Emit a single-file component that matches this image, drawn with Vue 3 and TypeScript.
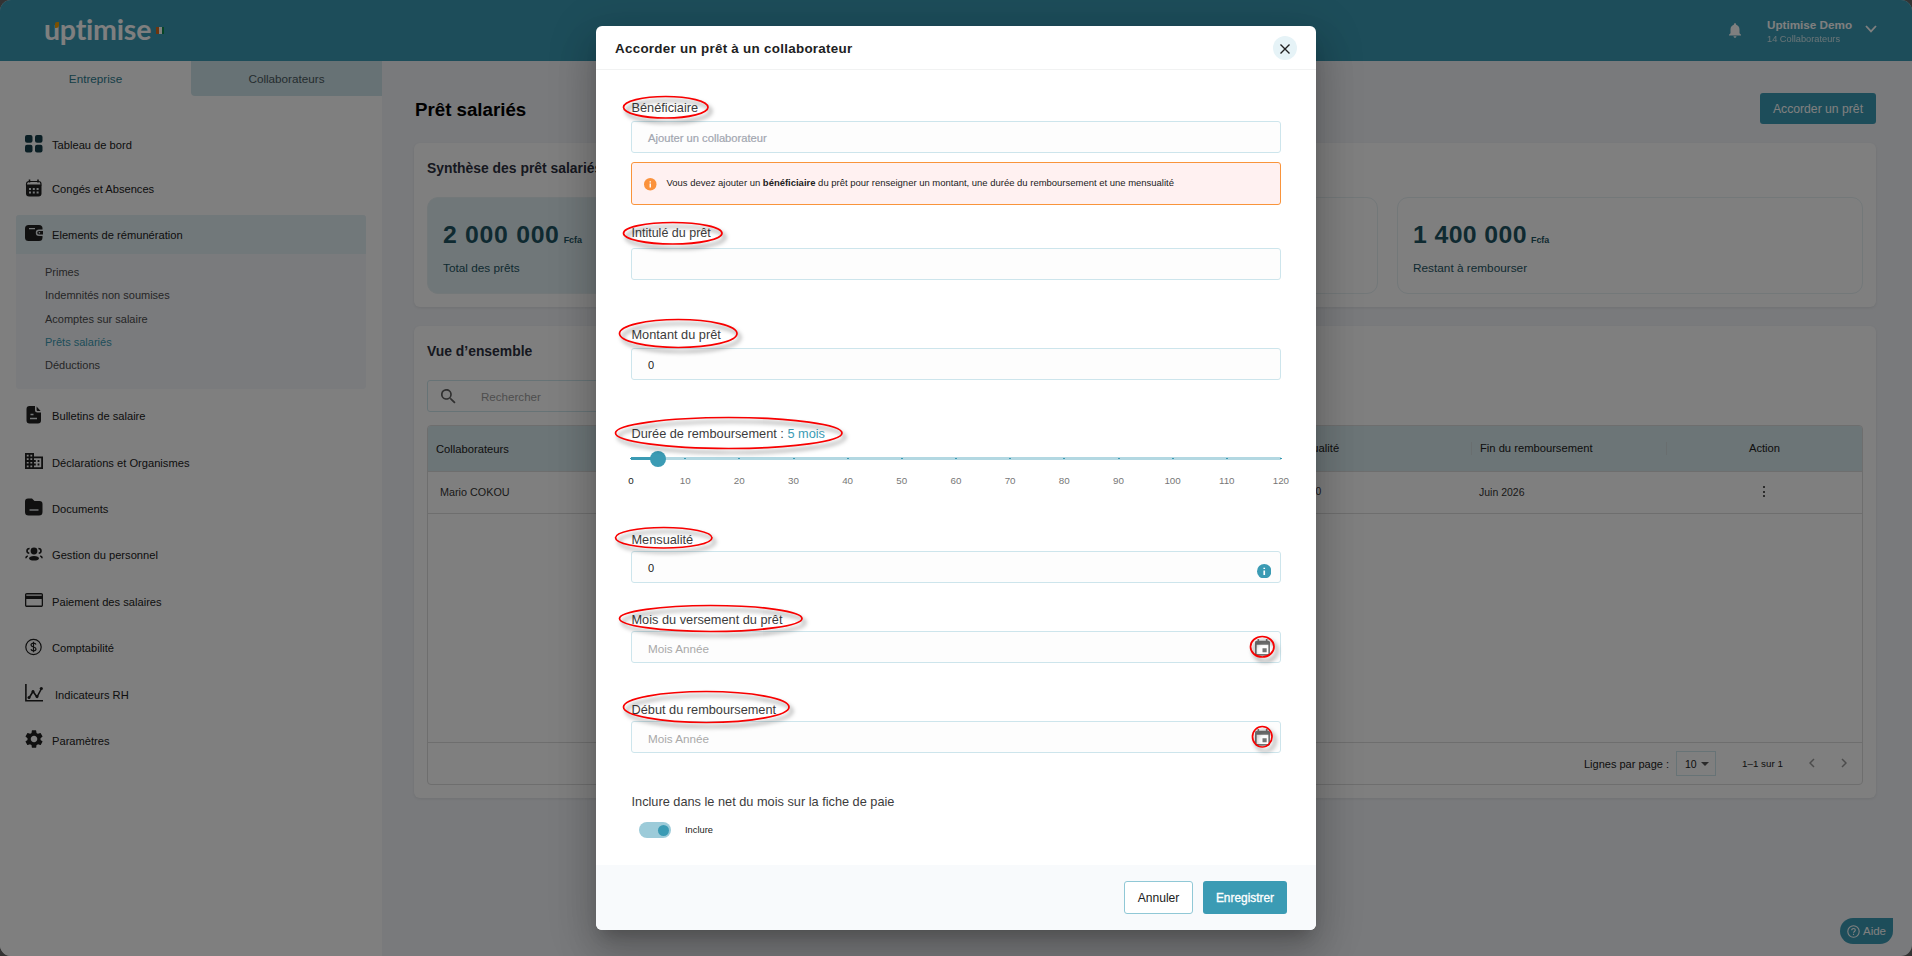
<script setup lang="ts">
import { ref, computed } from 'vue'

interface MenuItem {
  label: string
  icon: string
}

interface Ring {
  x1: number
  y1: number
  x2: number
  y2: number
}

const topMenu: MenuItem[] = [
  { label: 'Tableau de bord', icon: 'grid' },
  { label: 'Congés et Absences', icon: 'calendar' }
]

const subMenu = ['Primes', 'Indemnités non soumises', 'Acomptes sur salaire', 'Prêts salariés', 'Déductions']
const activeSub = ref('Prêts salariés')

const bottomMenu: MenuItem[] = [
  { label: 'Bulletins de salaire', icon: 'file' },
  { label: 'Déclarations et Organismes', icon: 'building' },
  { label: 'Documents', icon: 'folder' },
  { label: 'Gestion du personnel', icon: 'people' },
  { label: 'Paiement des salaires', icon: 'card' },
  { label: 'Comptabilité', icon: 'dollar' },
  { label: 'Indicateurs RH', icon: 'chart' },
  { label: 'Paramètres', icon: 'gear' }
]

const amount = ref('0')
const monthly = ref('0')
const duration = ref(5)
const maxDuration = 120
const included = ref(true)

const durationPercent = computed(() => (duration.value / maxDuration) * 100)
const ticks = Array.from({ length: 13 }, (_, i) => i * 10)

// annotations drawn over the form
const rings: Ring[] = [
  { x1: 623.5, y1: 96.5, x2: 708, y2: 118 },
  { x1: 623.5, y1: 222.5, x2: 722, y2: 244 },
  { x1: 619.5, y1: 319.5, x2: 737, y2: 347.5 },
  { x1: 615.5, y1: 417.5, x2: 842, y2: 448.5 },
  { x1: 615.5, y1: 527.5, x2: 712, y2: 548 },
  { x1: 619.5, y1: 605.5, x2: 802, y2: 631.5 },
  { x1: 623.5, y1: 691.5, x2: 789, y2: 722.5 },
  { x1: 1250.5, y1: 636.5, x2: 1274, y2: 657 },
  { x1: 1252.5, y1: 726.5, x2: 1272, y2: 747 }
]
</script>

<template>
  <div class="page">
    <div class="app">
      <header class="topbar">
        <div class="brand">
          <span class="brand-name">uptimise</span>
          <span class="brand-mark"></span>
          <span class="flag"><i class="flag-orange"></i><i class="flag-white"></i><i class="flag-green"></i></span>
        </div>
        <div class="account">
          <svg class="bell" viewBox="4 2.5 16 19.5"><path d="M12 22c1.1 0 2-.9 2-2h-4c0 1.1.9 2 2 2zm6-6v-5c0-3.07-1.63-5.64-4.5-6.32V4c0-.83-.67-1.5-1.5-1.5s-1.5.67-1.5 1.5v.68C7.64 5.36 6 7.92 6 11v5l-2 2v1h16v-1l-2-2z" /></svg>
          <div class="account-text">
            <span class="account-name">Uptimise Demo</span>
            <span class="account-count">14 Collaborateurs</span>
          </div>
          <svg class="chevron" viewBox="0 0 12 8"><path d="M1 1l5 5.4L11 1" /></svg>
        </div>
      </header>

      <div class="content">
        <aside class="sidebar">
          <div class="tabs">
            <div class="tab tab-active">Entreprise</div>
            <div class="tab tab-other">Collaborateurs</div>
          </div>
          <nav class="menu">
            <div v-for="item in topMenu" :key="item.label" class="menu-item menu-item-top">
              <svg class="menu-icon" viewBox="0 0 18 18">
                <g v-if="item.icon === 'grid'" class="grid-icon">
                  <rect x="0" y="0" width="7.5" height="7.8" rx="2" />
                  <rect x="10" y="0" width="7.5" height="7.8" rx="2" />
                  <rect x="0" y="9.7" width="7.5" height="7.8" rx="2" />
                  <rect x="10" y="9.7" width="7.5" height="7.8" rx="2" />
                </g>
                <g v-else>
                  <path d="M4.5.5v3M13 .5v3" class="line" />
                  <path d="M4 2.5h9.500a2.500 2.500 0 0 1 2.500 2.500v1H1.500V5A2.500 2.500 0 0 1 4 2.500z" class="outline" />
                  <path d="M1 6h15.500v8.500a3 3 0 0 1-3 3H4a3 3 0 0 1-3-3z" />
                  <path class="hole" d="M4 9h2v2H4zM7.800 9h2v2h-2zM11.600 9h2v2h-2zM4 12.400h2v2H4zM7.800 12.400h2v2h-2zM11.600 12.400h2v2h-2z" />
                </g>
              </svg>
              <span>{{ item.label }}</span>
            </div>

            <div class="menu-group">
              <div class="menu-item menu-group-head">
                <svg class="menu-icon" viewBox="0 0 18 18">
                  <rect x="0" y="1" width="17.5" height="16" rx="3.5" />
                  <path class="hole-line" d="M4 4.600h6" />
                  <path class="hole" d="M18 5.500h-4a3.200 3.200 0 0 0 0 6.400h4z" />
                  <path d="M18 7h-4a1.800 1.800 0 0 0 0 3.600h4z" />
                  <circle class="hole" cx="14.4" cy="8.8" r=".8" />
                </svg>
                <span>Elements de rémunération</span>
              </div>
              <ul class="submenu">
                <li
                  v-for="sub in subMenu"
                  :key="sub"
                  :class="{ active: sub === activeSub }"
                  @click="activeSub = sub"
                >{{ sub }}</li>
              </ul>
            </div>

            <div
              v-for="item in bottomMenu"
              :key="item.label"
              class="menu-item"
              :class="{ 'menu-item-shift': item.icon === 'chart' }"
            >
              <svg class="menu-icon" viewBox="0 0 18 18">
                <g v-if="item.icon === 'file'">
                  <path d="M4.500 0H10v4a2.500 2.500 0 0 0 2.500 2.500H16V14.500a3 3 0 0 1-3 3H4.500a3 3 0 0 1-3-3V3a3 3 0 0 1 3-3zM11.600.5L15.600 5h-3a1 1 0 0 1-1-1z" />
                  <path class="hole-line" d="M5.500 8.500h3M5 12.500h7" />
                </g>
                <path v-else-if="item.icon === 'building'" d="M9 4.500V1H0v16h18V4.500H9zM3.600 15.200H1.800v-1.800h1.800v1.800zm0-3.600H1.800V9.900h1.800v1.700zm0-3.500H1.800V6.300h1.800v1.800zm0-3.600H1.800V2.800h1.800v1.700zm3.600 10.700H5.400v-1.800h1.800v1.800zm0-3.600H5.400V9.900h1.800v1.700zm0-3.500H5.400V6.300h1.800v1.800zm0-3.600H5.400V2.800h1.800v1.700zm9 10.700H9v-1.800h1.800v-1.800H9V9.900h1.800V8.100H9V6.300h7.200v8.900zM14.400 8.100h-1.800v1.800h1.800V8.100zm0 3.500h-1.800v1.800h1.800v-1.800z" />
                <g v-else-if="item.icon === 'folder'">
                  <path d="M3 .5h4L9.500 3h5a3 3 0 0 1 3 3v8a3.500 3.500 0 0 1-3.500 3.500H3.500A3.500 3.500 0 0 1 0 14V3.500a3 3 0 0 1 3-3z" />
                  <path class="hole-line" d="M4.500 12h9" />
                </g>
                <g v-else-if="item.icon === 'people'">
                  <circle cx="9" cy="6" r="3.400" />
                  <path d="M9 11c3.200 0 5 1.200 5 2.400s-2 2.200-5 2.200-5-1-5-2.200S5.800 11 9 11z" />
                  <path class="line" d="M4.600 3.500C2.300 3.500 2 5 2 6s.6 2 2.300 2.200M13.400 3.500C15.700 3.500 16 5 16 6s-.6 2-2.300 2.200M2.800 11C1.400 11.300.9 12.200.9 13.200M15.200 11c1.400.3 1.900 1.200 1.900 2.200" />
                </g>
                <path v-else-if="item.icon === 'card'" d="M16.200 2H1.800C.8 2 0 2.800 0 3.800v10.400C0 15.200.8 16 1.800 16h14.400c1 0 1.800-.8 1.800-1.800V3.800C18 2.800 17.200 2 16.200 2zm.5 12.500H1.300V8h15.400v6.500zm0-9.700H1.300V3.400h15.400v1.400z" />
                <g v-else-if="item.icon === 'dollar'">
                  <circle class="outline" cx="8.500" cy="9" r="7.700" />
                  <path class="outline" d="M11 6.500C10.600 5.600 9.700 5.200 8.500 5.200 7 5.200 6 5.900 6 7c0 2.700 5 1.300 5 4 0 1.100-1 1.800-2.500 1.800-1.300 0-2.200-.5-2.600-1.500M8.500 3.700v10.600" />
                </g>
                <g v-else-if="item.icon === 'chart'">
                  <path class="line" d="M.9 0v16.800H18M4 14l4-6.500 4 5.500 4.500-8.500" />
                  <circle cx="4" cy="13.500" r="1.500" /><circle cx="8" cy="7.500" r="1.500" /><circle cx="12" cy="12.500" r="1.500" /><circle cx="16.300" cy="4.500" r="1.600" />
                </g>
                <path v-else transform="translate(-1.900 -1.900) scale(.91)" d="M19.140 12.940c.04-.3.060-.61.060-.94 0-.32-.02-.64-.07-.94l2.030-1.580a.49.490 0 0 0 .12-.61l-1.920-3.320a.488.488 0 0 0-.59-.22l-2.390.96c-.5-.38-1.030-.7-1.620-.94l-.36-2.540a.484.484 0 0 0-.48-.41h-3.840c-.24 0-.43.17-.47.41l-.36 2.540c-.59.24-1.130.57-1.620.94l-2.390-.96c-.22-.08-.47 0-.59.220L2.740 8.870c-.12.210-.08.470.12.610l2.030 1.580c-.05.300-.09.630-.09.940s.02.640.07.940l-2.030 1.580a.49.490 0 0 0-.12.610l1.920 3.320c.12.220.37.290.59.220l2.390-.96c.5.380 1.030.7 1.620.94l.36 2.540c.05.240.24.410.48.410h3.840c.24 0 .44-.17.47-.41l.36-2.540c.59-.24 1.130-.56 1.620-.94l2.390.96c.22.080.47 0 .59-.220l1.920-3.320c.12-.22.070-.47-.12-.61l-2.010-1.580zM12 15.600c-1.980 0-3.600-1.620-3.600-3.600s1.620-3.600 3.600-3.600 3.600 1.620 3.600 3.600-1.620 3.600-3.600 3.600z" />
              </svg>
              <span>{{ item.label }}</span>
            </div>
          </nav>
        </aside>

        <main class="main">
          <div class="main-head">
            <h1>Prêt salariés</h1>
            <button class="primary-button">Accorder un prêt</button>
          </div>

          <section class="card summary">
            <h2>Synthèse des prêt salariés</h2>
            <div class="stats">
              <div class="stat stat-filled">
                <div class="stat-value">2 000 000<small>Fcfa</small></div>
                <div class="stat-label">Total des prêts</div>
              </div>
              <div class="stat"></div>
              <div class="stat">
                <div class="stat-value stat-value-tight">1 400 000<small>Fcfa</small></div>
                <div class="stat-label">Restant à rembourser</div>
              </div>
            </div>
          </section>

          <section class="card overview">
            <h2>Vue d’ensemble</h2>
            <div class="search">
              <svg viewBox="0 0 18 18"><path d="M12.500 11h-.8l-.3-.3A6.500 6.500 0 1 0 10.700 11.400l.3.300v.8l5 5 1.500-1.500-5-5zm-6 0a4.500 4.500 0 1 1 0-9 4.500 4.500 0 0 1 0 9z" /></svg>
              <span>Rechercher</span>
            </div>
            <div class="table">
              <div class="row row-head">
                <span class="cell">Collaborateurs</span>
                <span class="cell">Mensualité</span>
                <span class="cell">Fin du remboursement</span>
                <span class="cell cell-action">Action</span>
              </div>
              <div class="row">
                <span class="cell cell-name">Mario COKOU</span>
                <span class="cell cell-amount">100 000</span>
                <span class="cell cell-date">Juin 2026</span>
                <span class="cell cell-action"><span class="dots"><i></i><i></i><i></i></span></span>
              </div>
              <div class="table-space"></div>
              <div class="pager">
                <span>Lignes par page :</span>
                <span class="pager-select">10<i class="caret"></i></span>
                <span class="pager-range">1–1 sur 1</span>
                <svg class="pager-arrow" viewBox="0 0 6 10"><path d="M5 1L1 5l4 4" /></svg>
                <svg class="pager-arrow pager-next" viewBox="0 0 6 10"><path d="M1 1l4 4-4 4" /></svg>
              </div>
            </div>
          </section>
        </main>
      </div>

      <div class="help">
        <svg viewBox="0 0 13 13"><circle cx="6.5" cy="6.5" r="5.7" /><path d="M4.700 5.200c0-1 .8-1.700 1.800-1.700s1.800.7 1.800 1.600c0 1.300-1.800 1.400-1.800 2.700M6.500 8.800v1.100" /></svg>
        <span>Aide</span>
      </div>
    </div>

    <div class="overlay">
      <div class="modal">
        <div class="modal-head">
          <span class="modal-title">Accorder un prêt à un collaborateur</span>
          <span class="close"><svg viewBox="0 0 12 12"><path d="M1.500 2.500l9 9M10.500 2.500l-9 9" /></svg></span>
        </div>

        <div class="modal-body">
          <label class="label">Bénéficiaire</label>
          <div class="input input-person">Ajouter un collaborateur</div>
          <div class="alert">
            <svg class="info-icon" viewBox="0 0 14 14"><circle cx="7" cy="7" r="7" /><path d="M7 3.500v1.400M7 6.200v4.300" /></svg>
            <span>Vous devez ajouter un <b>bénéficiaire</b> du prêt pour renseigner un montant, une durée du remboursement et une mensualité</span>
          </div>

          <label class="label label-title">Intitulé du prêt</label>
          <div class="input"></div>

          <label class="label label-amount">Montant du prêt</label>
          <div class="input">{{ amount }}</div>

          <label class="label label-duration">Durée de remboursement : <em>{{ duration }} mois</em></label>
          <div class="slider">
            <div class="slider-rail">
              <div class="slider-track" :style="{ width: durationPercent + '%' }"></div>
              <i v-for="t in ticks" :key="t" class="slider-dot" :style="{ left: (t / maxDuration) * 100 + '%' }"></i>
              <div class="slider-thumb" :style="{ left: durationPercent + '%' }"></div>
            </div>
            <div class="slider-ticks">
              <span v-for="t in ticks" :key="t" :class="{ passed: t <= duration }">{{ t }}</span>
            </div>
          </div>

          <label class="label label-monthly">Mensualité</label>
          <div class="input">
            {{ monthly }}
            <svg class="info-icon info-blue" viewBox="0 0 14 14"><circle cx="7" cy="7" r="7" /><path d="M7 3.500v1.400M7 6.200v4.300" /></svg>
          </div>

          <label class="label label-month">Mois du versement du prêt</label>
          <div class="input input-date">
            Mois Année
            <svg class="date-icon" viewBox="3 1 18 21"><path d="M17 12h-5v5h5v-5zM16 1v2H8V1H6v2H5c-1.110 0-1.990.9-1.990 2L3 19a2 2 0 0 0 2 2h14c1.100 0 2-.9 2-2V5c0-1.100-.9-2-2-2h-1V1h-2zm3 18H5V8h14v11z" /></svg>
          </div>

          <label class="label label-start">Début du remboursement</label>
          <div class="input input-date">
            Mois Année
            <svg class="date-icon" viewBox="3 1 18 21"><path d="M17 12h-5v5h5v-5zM16 1v2H8V1H6v2H5c-1.110 0-1.990.9-1.990 2L3 19a2 2 0 0 0 2 2h14c1.100 0 2-.9 2-2V5c0-1.100-.9-2-2-2h-1V1h-2zm3 18H5V8h14v11z" /></svg>
          </div>

          <label class="label label-include">Inclure dans le net du mois sur la fiche de paie</label>
          <div class="switch-row" @click="included = !included">
            <span class="switch" :class="{ on: included }"><i></i></span>
            <span>Inclure</span>
          </div>
        </div>

        <div class="modal-foot">
          <button class="outline-button">Annuler</button>
          <button class="save-button">Enregistrer</button>
        </div>
      </div>
    </div>

    <svg class="rings" viewBox="0 0 1912 956">
      <ellipse
        v-for="(r, i) in rings"
        :key="i"
        :cx="(r.x1 + r.x2) / 2"
        :cy="(r.y1 + r.y2) / 2"
        :rx="(r.x2 - r.x1) / 2"
        :ry="(r.y2 - r.y1) / 2"
      />
    </svg>
  </div>
</template>

<style>
body {
  margin: 0;
  background: #3a3a3c;
}
</style>

<style scoped>
.page {
  position: relative;
  width: 1912px;
  height: 956px;
  overflow: hidden;
  background: #666;
  font-family: "Liberation Sans", Arial, sans-serif;
  font-size: 11.2px;
  color: #212121;
}

.page * {
  box-sizing: border-box;
}

i,
em {
  font-style: normal;
}

button {
  font-family: inherit;
  padding: 0;
  border: none;
  border-radius: 3px;
}

.app {
  position: relative;
  display: flex;
  flex-direction: column;
  height: 956px;
  border-radius: 11px;
  overflow: hidden;
  background: #f2f4f8;
}

.topbar {
  height: 61px;
  flex: none;
  display: flex;
  justify-content: space-between;
  align-items: center;
  padding: 0 35px 0 44px;
  background: #3b9bb4;
  color: #fff;
}

.brand {
  position: relative;
  display: flex;
  align-items: center;
  gap: 5px;
  height: 61px;
}

.brand-name {
  font-family: Lato, sans-serif;
  font-weight: 700;
  font-size: 28.5px;
  line-height: 34px;
  letter-spacing: -0.2px;
  margin-top: -4px;
}

.brand-mark {
  position: absolute;
  left: 11px;
  top: 22px;
  width: 4px;
  height: 6px;
  background: #f5a000;
  border-radius: 2px 0 3px 0;
}

.flag {
  display: flex;
}

.flag i {
  width: 2.7px;
  height: 7px;
}

.flag-orange {
  background: #d86b1c;
}

.flag-white {
  background: #fff;
}

.flag-green {
  background: #0d8a4c;
}

.account {
  display: flex;
  align-items: center;
}

.bell {
  width: 12px;
  height: 15px;
  fill: #fff;
  margin-right: 26px;
}

.account-text {
  display: flex;
  flex-direction: column;
  width: 98px;
  padding-top: 2px;
}

.account-name {
  font-size: 11.7px;
  font-weight: 700;
  line-height: 15px;
}

.account-count {
  font-size: 9.25px;
  line-height: 14px;
  opacity: 0.75;
}

.chevron {
  width: 12px;
  height: 8px;
  margin-top: -4px;
  fill: none;
  stroke: #fff;
  stroke-width: 1.8;
}

.content {
  flex: 1;
  display: flex;
}

.sidebar {
  width: 382px;
  background: #fff;
}

.tabs {
  display: flex;
  height: 35px;
}

.tab {
  flex: 1;
  display: flex;
  align-items: center;
  justify-content: center;
  font-size: 11.7px;
}

.tab-active {
  color: #2d7c90;
}

.tab-other {
  background: #cfe4ea;
  color: #4a5a60;
  border-bottom-left-radius: 4px;
}

.menu {
  display: flex;
  flex-direction: column;
  padding: 27px 16px 0;
}

.menu-item {
  display: flex;
  align-items: center;
  gap: 9px;
  height: 46.4px;
  padding-left: 9px;
  font-size: 11.15px;
}

.menu-item-top {
  height: 44px;
}

.menu-item-shift {
  gap: 12px;
}

.menu-icon {
  width: 18px;
  height: 18px;
  margin-top: -3px;
  fill: #212121;
}

.grid-icon {
  fill: #163f4a;
}

.menu-icon .hole {
  fill: #e8eef1;
}

.menu-icon .hole-line {
  fill: none;
  stroke: #e8eef1;
  stroke-width: 1.4;
}

.menu-icon .line {
  fill: none;
  stroke: #212121;
  stroke-width: 1.6;
}

.menu-icon .outline {
  fill: none;
  stroke: #212121;
  stroke-width: 1.2;
}

.menu-group {
  margin: 4px 0;
  height: 174px;
  background: #f5f7fa;
  border-radius: 3px;
}

.menu-group-head {
  height: 39px;
  background: #e3f0f4;
  border-radius: 3px 3px 0 0;
}

.submenu {
  list-style: none;
  margin: 0;
  padding: 6px 0 0 29px;
  font-size: 11px;
  color: #4c4c4e;
}

.submenu li {
  height: 23.3px;
  line-height: 24px;
}

.submenu .active {
  color: #3b9bb4;
}

.main {
  flex: 1;
  padding: 32px 36px 0 32px;
}

.main-head {
  display: flex;
  justify-content: space-between;
  align-items: center;
  height: 31px;
  margin-bottom: 19px;
}

h1 {
  margin: 2px 0 0 1px;
  font-size: 18.7px;
  color: #000;
}

h2 {
  margin: 0;
  font-size: 13.9px;
  line-height: 18px;
  color: #2c3040;
}

.primary-button {
  width: 116px;
  height: 31px;
  background: #3b9bb4;
  color: #fff;
  font-size: 12.2px;
}

.card {
  background: #fff;
  border-radius: 6px;
  box-shadow: 0 1px 3px rgba(0, 0, 0, 0.08);
  padding: 16px 13px 0;
}

.summary {
  height: 164px;
  margin-bottom: 19px;
}

.stats {
  display: grid;
  grid-template-columns: repeat(3, 1fr);
  gap: 19px;
  margin-top: 20px;
}

.stat {
  height: 97px;
  padding: 22px 17px 0 15px;
  border: 1px solid #e6f0f3;
  border-radius: 11px;
}

.stat-filled {
  background: #e0eef2;
}

.stat-value {
  height: 30px;
  line-height: 30px;
  font-size: 24.8px;
  font-weight: 700;
  letter-spacing: 0.7px;
  color: #1e5563;
  white-space: nowrap;
}

.stat-value-tight {
  letter-spacing: 0.4px;
}

.stat-value small {
  margin-left: 4px;
  font-size: 8.95px;
  letter-spacing: 0;
}

.stat-label {
  margin-top: 9px;
  font-size: 11.8px;
  line-height: 18px;
  color: #1e5563;
}

.overview {
  height: 472px;
}

.search {
  display: flex;
  align-items: center;
  width: 300px;
  height: 32px;
  margin-top: 20px;
  padding-left: 13px;
  border: 1px solid #cfe6ed;
  border-radius: 3px;
  font-size: 11.6px;
  color: #9c9c9c;
}

.search svg {
  width: 15px;
  height: 15px;
  margin-right: 25px;
  fill: #606060;
}

.table {
  display: flex;
  flex-direction: column;
  height: 360px;
  margin-top: 13px;
  border: 1px solid #dcdcdc;
  border-radius: 4px;
  overflow: hidden;
}

.row {
  display: grid;
  grid-template-columns: 1fr 195px 195px 196px;
  align-items: center;
  height: 42px;
  padding-bottom: 2px;
  border-bottom: 1px solid #dcdcdc;
  color: #333;
}

.row-head {
  height: 46px;
  padding-bottom: 0;
  background: #d8eaee;
  color: #212121;
}

.cell {
  padding-left: 8px;
}

.row-head .cell + .cell {
  border-left: 1px solid #d2dcdf;
  line-height: 13px;
}

.cell-name {
  padding-left: 12px;
  font-size: 10.8px;
}

.cell-amount {
  font-size: 10.3px;
}

.cell-date {
  font-size: 10.5px;
}

.cell-action {
  padding: 0;
  text-align: center;
}

.dots {
  display: flex;
  flex-direction: column;
  align-items: center;
  gap: 2.5px;
}

.dots i {
  width: 2px;
  height: 2px;
  border-radius: 50%;
  background: #212121;
}

.table-space {
  flex: 1;
}

.pager {
  display: flex;
  align-items: center;
  justify-content: flex-end;
  height: 42px;
  border-top: 1px solid #dcdcdc;
  padding-right: 15px;
  font-size: 11px;
}

.pager-select {
  display: flex;
  align-items: center;
  justify-content: space-between;
  width: 40px;
  height: 25px;
  margin: 0 26px 0 7px;
  padding: 0 6px 0 8px;
  border: 1px solid #cfe6ed;
  font-size: 10.5px;
}

.caret {
  border: 4px solid transparent;
  border-top-color: #555;
  border-bottom: none;
}

.pager-range {
  font-size: 9.8px;
  width: 67px;
}

.pager-arrow {
  width: 6px;
  height: 10px;
  margin-top: -2px;
  fill: none;
  stroke: #999;
  stroke-width: 1.5;
}

.pager-next {
  margin-left: 26px;
}

.help {
  position: absolute;
  left: 1840px;
  top: 918px;
  display: flex;
  align-items: center;
  justify-content: center;
  gap: 3px;
  width: 53px;
  height: 26px;
  border-radius: 13px 0 13px 13px;
  background: #3b9bb4;
  color: #fff;
  font-size: 11.5px;
}

.help svg {
  width: 13px;
  height: 13px;
  fill: none;
  stroke: #fff;
  stroke-width: 1.1;
}

.overlay {
  position: absolute;
  inset: 0;
  display: flex;
  align-items: center;
  justify-content: center;
  background: rgba(0, 0, 0, 0.5);
}

.modal {
  display: flex;
  flex-direction: column;
  width: 720px;
  height: 904px;
  border-radius: 6px;
  overflow: hidden;
  background: #fff;
  box-shadow: 0 11px 15px -7px rgba(0, 0, 0, 0.2), 0 24px 38px 3px rgba(0, 0, 0, 0.14), 0 9px 46px 8px rgba(0, 0, 0, 0.12);
}

.modal-head {
  display: flex;
  align-items: center;
  justify-content: space-between;
  height: 44px;
  padding: 0 19px;
  border-bottom: 1px solid #f1f2f2;
}

.modal-title {
  margin-top: 2px;
  font-size: 13.4px;
  font-weight: 700;
  letter-spacing: 0.28px;
}

.close {
  display: flex;
  align-items: center;
  justify-content: center;
  width: 24px;
  height: 24px;
  border-radius: 50%;
  background: #e6f3f7;
}

.close svg {
  width: 12px;
  height: 12px;
  margin-top: 1px;
  fill: none;
  stroke: #212121;
  stroke-width: 1.4;
}

.modal-body {
  display: flex;
  flex-direction: column;
  height: 795px;
  padding: 28px 35px 0;
}

.label {
  height: 18px;
  line-height: 20px;
  margin-bottom: 5px;
  padding-left: 0.5px;
  font-size: 12.75px;
  color: #3c3c3c;
}

.label em {
  color: #3b9bb4;
}

.label-title {
  margin-top: 20px;
  line-height: 17px;
  font-size: 12.5px;
}

.label-amount {
  margin-top: 45px;
}

.label-duration {
  margin-top: 44px;
}

.label-monthly {
  margin-top: 42px;
  margin-bottom: 3px;
}

.label-month {
  margin-top: 27px;
  margin-bottom: 3px;
}

.label-start {
  margin-top: 37px;
  margin-bottom: 3px;
}

.label-include {
  margin-top: 39px;
}

.input {
  display: flex;
  align-items: center;
  justify-content: space-between;
  height: 32px;
  flex: none;
  padding: 2px 8px 0 16px;
  border: 1px solid #cde5ec;
  border-radius: 3px;
  background: #fdfdfd;
  font-size: 11px;
}

.input-person {
  font-size: 11.2px;
  color: #a2a6b0;
  -webkit-text-stroke: 0.2px #a2a6b0;
}

.input-date {
  font-size: 11.7px;
  color: #a9a9a9;
}

.date-icon {
  width: 15px;
  height: 17.5px;
  margin: -1px 2px 0 0;
  fill: #757575;
}

.alert {
  display: flex;
  align-items: center;
  gap: 10px;
  height: 43px;
  flex: none;
  margin-top: 9px;
  padding: 0 12px;
  border: 1px solid #f9943b;
  border-radius: 3px;
  background: #fff1f1;
  font-size: 9.48px;
  white-space: nowrap;
}

.alert span {
  margin-top: -2px;
}

.info-icon {
  width: 12.5px;
  height: 12.5px;
  margin-top: 2px;
  fill: #fb923c;
}

.info-icon path {
  stroke: #fff;
  stroke-width: 1.6;
}

.info-blue {
  width: 14.5px;
  height: 14.5px;
  margin: 6px 1px 0 0;
  fill: #3b9bb4;
}

.slider {
  height: 41px;
}

.slider-rail {
  position: relative;
  height: 3px;
  margin-top: 10px;
  background: #b3d8e2;
}

.slider-track {
  height: 3px;
  background: #3b9bb4;
}

.slider-dot {
  position: absolute;
  top: 1px;
  width: 2px;
  height: 1px;
  margin-left: -1px;
  background: #3b9bb4;
}

.slider-thumb {
  position: absolute;
  top: -6.5px;
  width: 16px;
  height: 16px;
  margin-left: -8px;
  border-radius: 50%;
  background: #3b9bb4;
}

.slider-ticks {
  display: flex;
  justify-content: space-between;
  margin: 14px -12px 0;
  font-size: 9.8px;
  line-height: 14px;
  color: #777;
}

.slider-ticks span {
  width: 24px;
  text-align: center;
}

.slider-ticks .passed {
  color: #212121;
}

.switch-row {
  display: flex;
  align-items: center;
  gap: 14px;
  height: 16px;
  margin: 7px 0 0 8px;
  font-size: 9.3px;
}

.switch {
  display: flex;
  align-items: center;
  width: 32px;
  height: 16px;
  padding: 0 2px;
  border-radius: 8px;
  background: #d5d5d5;
}

.switch.on {
  justify-content: flex-end;
  background: #9ccbd9;
}

.switch i {
  width: 11px;
  height: 11px;
  border-radius: 50%;
  background: #3b9bb4;
}

.modal-foot {
  display: flex;
  justify-content: flex-end;
  gap: 10px;
  flex: 1;
  padding: 16px 29px 0;
  background: #f8fafc;
}

.outline-button {
  width: 69px;
  height: 33px;
  border: 1px solid #90c8d6;
  background: #fff;
  font-size: 12.1px;
  color: #212121;
}

.save-button {
  width: 84px;
  height: 33px;
  background: #3b9bb4;
  color: #fff;
  font-size: 11.9px;
  -webkit-text-stroke: 0.3px #fff;
}

.rings {
  position: absolute;
  inset: 0;
  width: 1912px;
  height: 956px;
  pointer-events: none;
}

.rings ellipse {
  fill: none;
  stroke: #f80000;
  stroke-width: 1.7;
  filter: drop-shadow(3px 4px 2px rgba(0, 0, 0, 0.5));
}
</style>
